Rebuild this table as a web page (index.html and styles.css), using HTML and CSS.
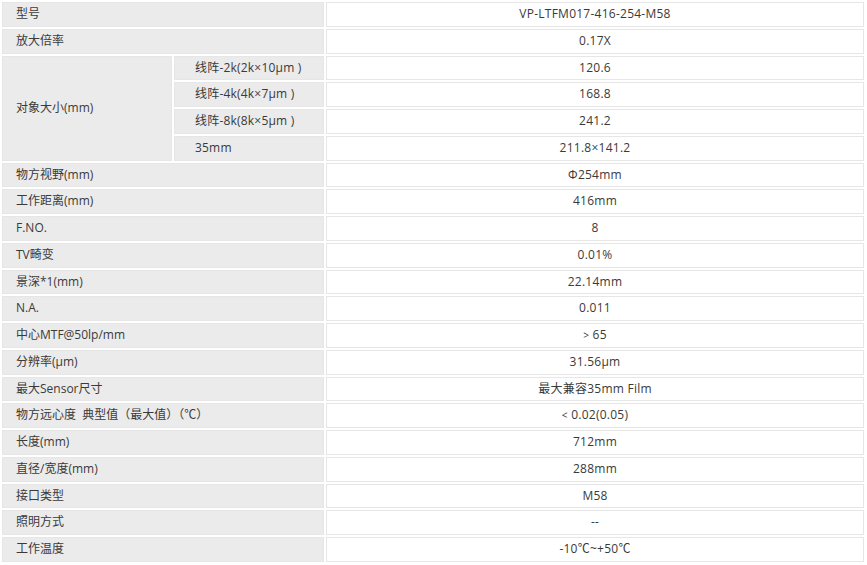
FILE: index.html
```html
<!DOCTYPE html>
<html lang="zh-CN">
<head>
<meta charset="utf-8">
<title>参数</title>
<link rel="stylesheet" href="styles.css">
</head>
<body>
<table class="spec">
  <colgroup>
    <col class="c1"><col class="c2"><col class="c3">
  </colgroup>
  <tbody>
    <tr><td class="k" colspan="2">型号</td><td class="v">VP-LTFM017-416-254-M58</td></tr>
    <tr><td class="k" colspan="2">放大倍率</td><td class="v">0.17X</td></tr>
    <tr><td class="k" rowspan="4">对象大小(mm)</td><td class="k sub">线阵-2k(2k×10μm )</td><td class="v">120.6</td></tr>
    <tr><td class="k sub">线阵-4k(4k×7μm )</td><td class="v">168.8</td></tr>
    <tr><td class="k sub">线阵-8k(8k×5μm )</td><td class="v">241.2</td></tr>
    <tr><td class="k sub">35mm</td><td class="v">211.8×141.2</td></tr>
    <tr><td class="k" colspan="2">物方视野(mm)</td><td class="v">Φ254mm</td></tr>
    <tr><td class="k" colspan="2">工作距离(mm)</td><td class="v">416mm</td></tr>
    <tr><td class="k" colspan="2">F.NO.</td><td class="v">8</td></tr>
    <tr><td class="k" colspan="2">TV畸变</td><td class="v">0.01%</td></tr>
    <tr><td class="k" colspan="2">景深*1(mm)</td><td class="v">22.14mm</td></tr>
    <tr><td class="k" colspan="2">N.A.</td><td class="v">0.011</td></tr>
    <tr><td class="k" colspan="2">中心MTF@50lp/mm</td><td class="v"><span class="sym">&gt;</span> 65</td></tr>
    <tr><td class="k" colspan="2">分辨率(μm)</td><td class="v">31.56μm</td></tr>
    <tr><td class="k" colspan="2">最大Sensor尺寸</td><td class="v">最大兼容35mm Film</td></tr>
    <tr><td class="k" colspan="2">物方远心度&nbsp;&nbsp;典型值（最大值）（℃）</td><td class="v"><span class="sym">&lt;</span> 0.02(0.05)</td></tr>
    <tr><td class="k" colspan="2">长度(mm)</td><td class="v">712mm</td></tr>
    <tr><td class="k" colspan="2">直径/宽度(mm)</td><td class="v">288mm</td></tr>
    <tr><td class="k" colspan="2">接口类型</td><td class="v">M58</td></tr>
    <tr><td class="k" colspan="2">照明方式</td><td class="v">--</td></tr>
    <tr><td class="k" colspan="2">工作温度</td><td class="v">-10℃~+50℃</td></tr>
  </tbody>
</table>
</body>
</html>
```

FILE: styles.css
```css
html, body {
  margin: 0;
  padding: 0;
  background: #ffffff;
}

.spec {
  width: 866px;
  border-collapse: separate;
  border-spacing: 2px;
  table-layout: fixed;
  font-family: "Open Sans", "Noto Sans CJK SC", sans-serif;
  font-size: 12px;
  color: #3a3a3a;
}

.c1 { width: 170px; }
.c2 { width: 150px; }
.c3 { width: 538px; }

.spec td {
  border: 1px solid #e6e6e6;
  padding: 0;
  height: 22.75px;
  line-height: 22.75px;
  white-space: nowrap;
  vertical-align: middle;
}

.k {
  background: #ebebeb;
  border-color: #e8e8e8;
  padding-left: 13px !important;
  text-align: left;
}

.k.sub {
  padding-left: 20px !important;
  letter-spacing: 0.2px;
}

.v {
  background: #ffffff;
  text-align: center;
  letter-spacing: 0.25px;
}

.sym {
  font-size: 10px;
}
```
